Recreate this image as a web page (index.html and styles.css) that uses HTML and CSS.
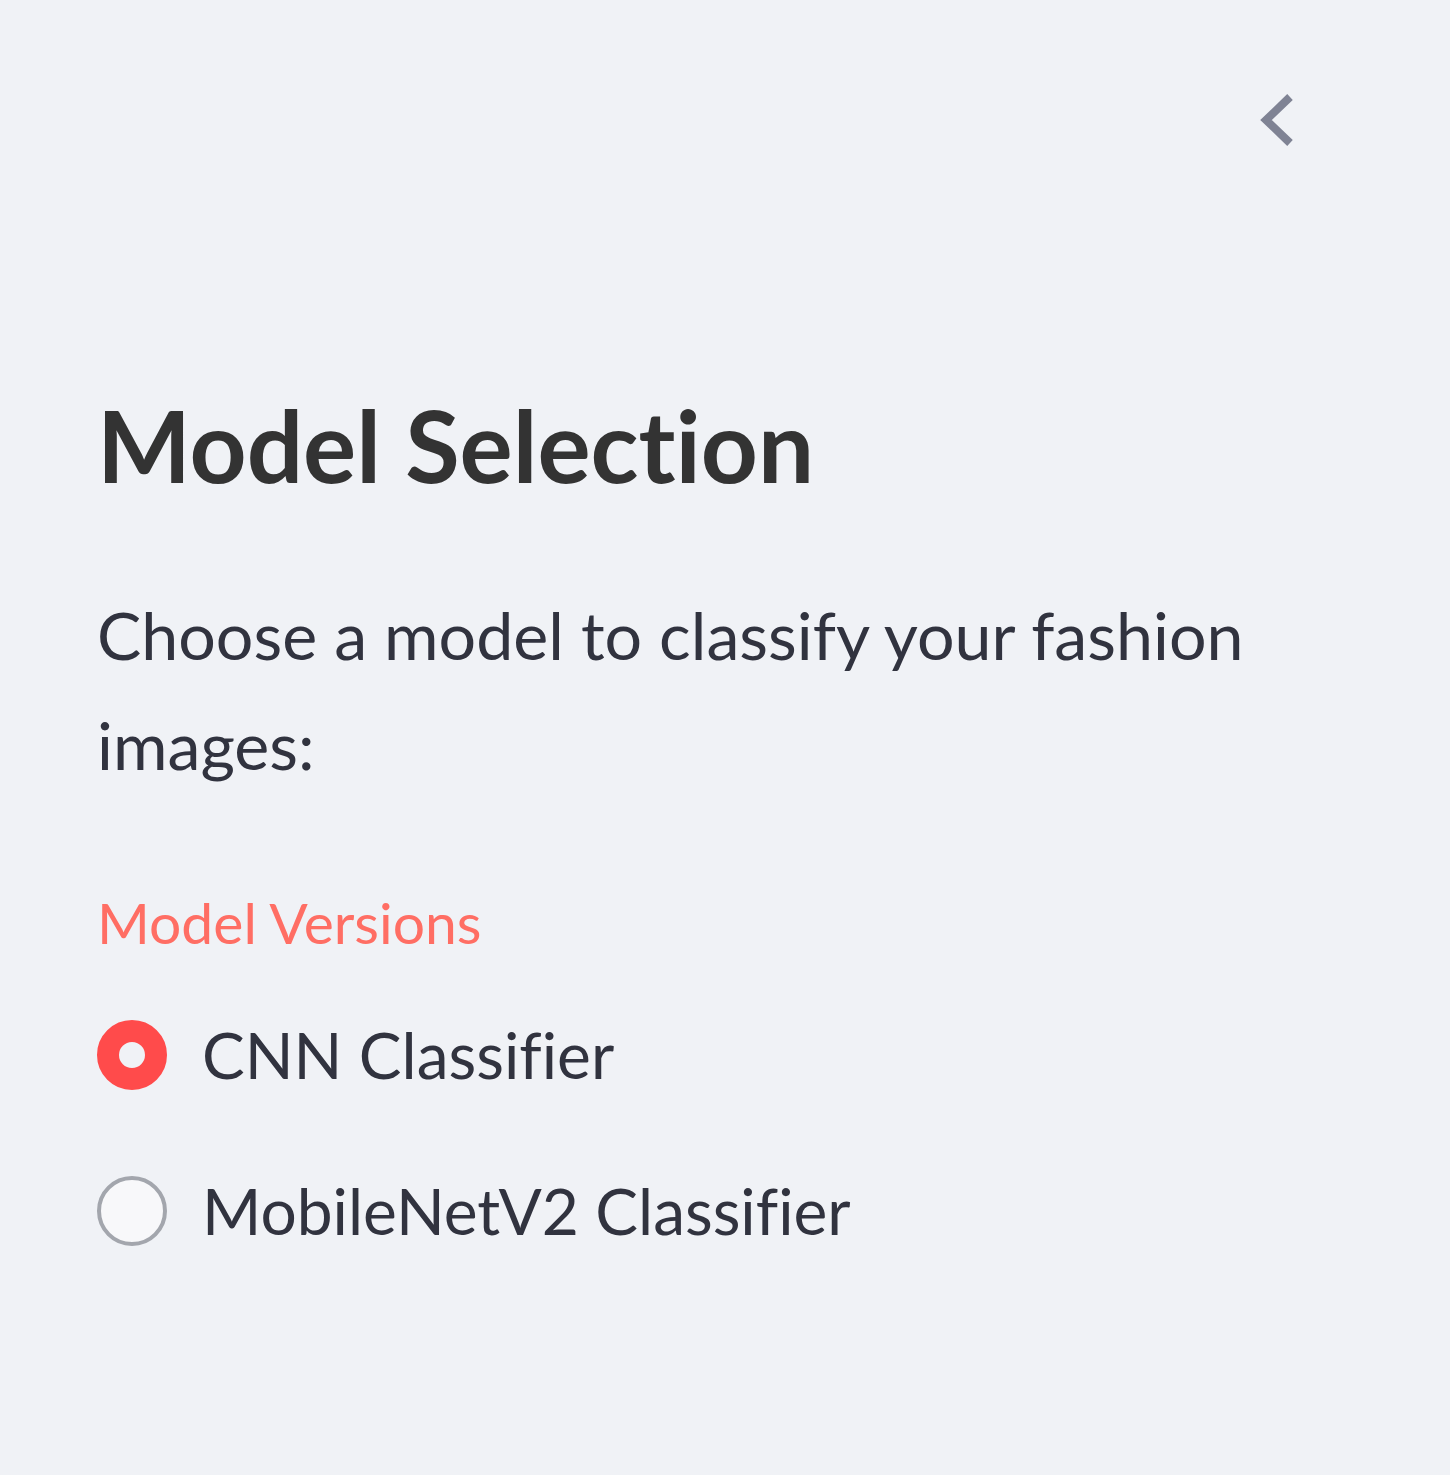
FILE: index.html
```html
<!DOCTYPE html>
<html>
<head>
<meta charset="utf-8">
<link rel="stylesheet" href="styles.css">
</head>
<body>
<aside class="sidebar">
  <div class="topbar">
    <button class="collapse" aria-label="Collapse sidebar">
      <svg width="44" height="60" viewBox="0 0 44 60"><polyline points="34,7 10,30 34,53" fill="none" stroke="#7f8394" stroke-width="8"/></svg>
    </button>
  </div>
  <h2 class="title">Model Selection</h2>
  <p class="desc">Choose a model to classify your fashion images:</p>
  <div class="radio-group">
    <div class="group-label">Model Versions</div>
    <label class="option first">
      <span class="dot checked"></span>
      <span class="opt-text">CNN Classifier</span>
    </label>
    <label class="option">
      <span class="dot"></span>
      <span class="opt-text">MobileNetV2 Classifier</span>
    </label>
  </div>
</aside>
</body>
</html>
```
FILE: styles.css
```css
html, body {
  margin: 0;
  padding: 0;
  background: #f0f2f6;
}
body {
  font-family: Lato, "Noto Sans", sans-serif;
  font-variant-ligatures: none;
  color: #31333f;
  width: 1450px;
  height: 1475px;
  overflow: hidden;
}
.sidebar {
  padding: 0 150px 0 97px;
}
.topbar {
  display: flex;
  justify-content: flex-end;
  padding-top: 90px;
  height: 150px;
}
.collapse {
  background: none;
  border: none;
  padding: 0;
  width: 44px;
  height: 60px;
  margin-right: 0;
}
.collapse svg { display: block; }
.title {
  margin: 140px 0 0 0;
  font-size: 99.5px;
  font-weight: 700;
  line-height: 130px;
  color: #333333;
}
.desc {
  margin: 70px 0 0 0;
  font-size: 66.3px;
  line-height: 110px;
}
.radio-group {
  margin-top: 82px;
}
.group-label {
  font-size: 57px;
  line-height: 80px;
  color: #ff6e64;
}
.option {
  display: flex;
  align-items: center;
  gap: 35px;
  height: 156px;
}
.option.first { margin-top: 15px; }
.dot {
  box-sizing: border-box;
  width: 70px;
  height: 70px;
  border-radius: 50%;
  border: 4px solid #a3a6ad;
  background: #f8f8fa;
  flex: none;
}
.dot.checked {
  border: 22px solid #ff4b4b;
  background: #f0f2f6;
}
.opt-text {
  font-size: 64px;
  line-height: 90px;
}
```
